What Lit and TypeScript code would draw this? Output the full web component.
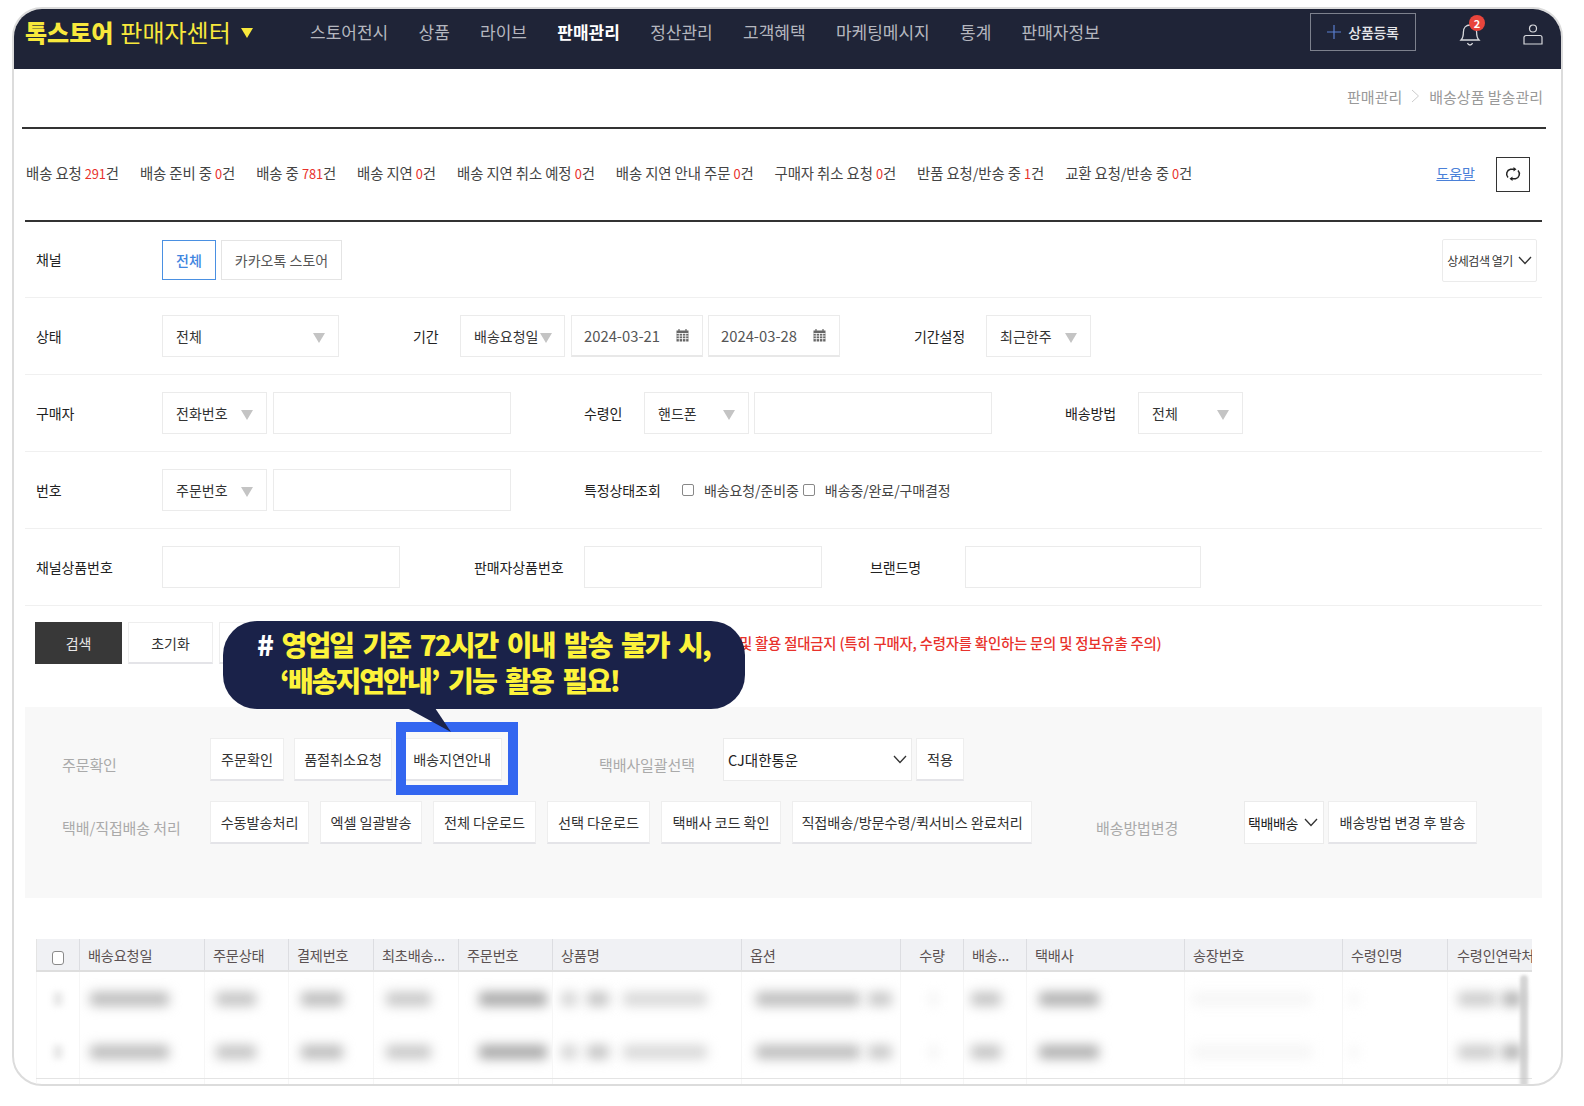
import { LitElement, html, css, svg } from "lit";
import { customElement } from "lit/decorators.js";
import { styleMap } from "lit/directives/style-map.js";

const NAV = ["스토어전시", "상품", "라이브", "판매관리", "정산관리", "고객혜택", "마케팅메시지", "통계", "판매자정보"];
const STATUS: [string, string][] = [
  ["배송 요청 ", "291"], ["배송 준비 중 ", "0"], ["배송 중 ", "781"], ["배송 지연 ", "0"], ["배송 지연 취소 예정 ", "0"],
  ["배송 지연 안내 주문 ", "0"], ["구매자 취소 요청 ", "0"], ["반품 요청/반송 중 ", "1"], ["교환 요청/반송 중 ", "0"],
];
// width, label, alignment, blurred bars [offset, width, colour]
type Col = { w: number; t: string; c?: boolean; bars: [number, number, string][] };
const COLS: Col[] = [
  { w: 125, t: "배송요청일", bars: [[10, 79, "#bcbcbc"]] },
  { w: 84, t: "주문상태", bars: [[11, 40, "#c4c4c4"]] },
  { w: 85, t: "결제번호", bars: [[12, 42, "#bcbcbc"]] },
  { w: 85, t: "최초배송...", bars: [[12, 45, "#c8c8c8"]] },
  { w: 94, t: "주문번호", bars: [[20, 68, "#a8a8a8"]] },
  { w: 189, t: "상품명", bars: [[8, 16, "#d2d2d2"], [10, 22, "#c4c4c4"], [14, 84, "#d8d8d8"]] },
  { w: 159, t: "옵션", bars: [[14, 104, "#bcbcbc"], [8, 24, "#c8c8c8"]] },
  { w: 63, t: "수량", c: true, bars: [[30, 5, "#e8e8e8"]] },
  { w: 63, t: "배송...", bars: [[7, 30, "#c4c4c4"]] },
  { w: 158, t: "택배사", bars: [[12, 60, "#b0b0b0"]] },
  { w: 158, t: "송장번호", bars: [[6, 122, "#f6f6f6"]] },
  { w: 105, t: "수령인명", bars: [[8, 6, "#f0f0f0"]] },
  { w: 85, t: "수령인연락처", bars: [[10, 38, "#cccccc"], [6, 20, "#b0b0b0"]] },
];

const chevron = svg`<svg class="chev" viewBox="0 0 14 9" width="14" height="9"><path d="M1 1l6 6.5L13 1" fill="none" stroke="#333" stroke-width="1.3"/></svg>`;
const calendar = svg`<svg class="cal" viewBox="0 0 13 13" width="13" height="13"><rect x="0.5" y="1.5" width="12" height="11" fill="#666"/><path d="M0.5 4.5h12M0.5 7h12M0.5 9.6h12M3.3 4v9M6.5 4v9M9.7 4v9" stroke="#fff" stroke-width=".8"/><path d="M3 0v3M10 0v3" stroke="#666" stroke-width="1.2"/></svg>`;

@customElement("app-root")
export class AppRoot extends LitElement {
  static styles = css`
    :host { display: block; height: 1106px; padding: 7px 0 0 12px; box-sizing: border-box; background: #fff;
      font-family: "Noto Sans CJK KR", "Noto Sans", sans-serif; font-size: 14px; color: #333; overflow: hidden; }
    * { box-sizing: border-box; }
    .frame { position: relative; width: 1551px; height: 1079px; border: 2px solid #dcdcdc; border-radius: 30px; overflow: hidden; background: #fff; }

    .top { height: 60px; background: #1f2437; display: flex; align-items: center; padding: 0 0 15px 11px; color: #b5b7bf; }
    .logo { width: 285px; font-size: 24px; color: #f8e83c; display: flex; align-items: center; white-space: nowrap; }
    .logo b { font-weight: 800; margin-right: 7px; }
    .logo i { width: 0; height: 0; border: 6.5px solid transparent; border-top: 10px solid #f8e83c; border-bottom: 0; margin-left: 10px; margin-top: 3px; }
    .nav { display: flex; gap: 30.3px; font-size: 17px; flex: 1; }
    .nav .on { color: #fff; font-weight: 700; }
    .add { width: 106px; height: 38px; margin-top: 0; border: 1px solid #7d818d; display: flex; align-items: center; justify-content: center; gap: 7px; color: #e6e7ea; font-size: 14px; font-weight: 500; letter-spacing: -.3px; }
    .bell { position: relative; width: 30px; height: 34px; margin-left: 42px; margin-top: 6px; }
    .badge { position: absolute; left: 11px; top: -3px; width: 16px; height: 16px; border-radius: 50%; background: #e8453c; color: #fff; font-size: 11px; font-weight: 700; display: flex; align-items: center; justify-content: center; }
    .user { margin: 6px 18px 0 35px; }

    .crumb { height: 60px; display: flex; align-items: center; justify-content: flex-end; gap: 9px; padding: 0 3px 4px 0; color: #999; font-size: 15px; border-bottom: 2px solid #333; margin: 0 15px 0 8px; }

    .status { height: 93px; margin: 0 19px 0 11px; border-bottom: 2px solid #333; display: flex; align-items: center; padding: 0 12px 4px 1px; }
    .items { display: flex; gap: 21px; flex: 1; white-space: nowrap; letter-spacing: -.1px; color: #444; font-size: 14.4px; }
    .items em { font-style: normal; color: #e8322c; font-size: 12.8px; }
    .help { color: #4a80d8; text-decoration: underline; font-size: 14px; margin-right: 21px; }
    .refresh { width: 34px; height: 35px; margin-top: 3px; border: 1px solid #333; display: flex; align-items: center; justify-content: center; }

    .form { margin: 0 19px 0 11px; }
    .row { height: 77px; display: flex; align-items: center; padding: 0 5px 0 11px; border-bottom: 1px solid #f0f0f0; white-space: nowrap; }
    .row.first { height: 76px; padding-bottom: 2px; }
    .lab { color: #222; font-size: 14px; letter-spacing: -.1px; }
    .l126 { width: 126px; }
    .box { height: 42px; border: 1px solid #ebebeb; background: #fff; display: flex; align-items: center; justify-content: space-between; padding: 0 13px; color: #333; flex: none; }
    .tri { width: 0; height: 0; border: 6.5px solid transparent; border-top: 10px solid #c4c4c4; border-bottom: 0; margin-top: 3px; }
    .ch { height: 40px; margin-top: 2px; border: 1px solid #e4e4e4; display: flex; align-items: center; justify-content: center; color: #555; }
    .ch.on { width: 54px; border-color: #4a90e2; color: #3f86df; font-weight: 500; }
    .ch.off { width: 121px; margin-left: 5px; }
    .detail { margin-left: auto; margin-top: 3px; width: 95px; height: 43px; border: 1px solid #ebebeb; border-radius: 2px; display: flex; align-items: center; justify-content: center; gap: 5px; font-size: 12px; letter-spacing: -.5px; }
    .w105 { width: 105px; } .w177 { width: 177px; } .w238 { width: 238px; } .w236 { width: 236px; } .w132 { width: 132px; }
    .w104 { width: 105px; padding-right: 12px; padding-left: 13px; }
    .date { color: #555; font-size: 14.8px; border-bottom: 2px solid #e8e8e8; padding: 0 13px 0 12px; }
    .ml4 { margin-left: 6px; } .ml3 { margin-left: 5px; } .ml5 { margin-left: 5px; }
    .g74 { margin-left: 74px; width: 47px; }
    .g74d { margin-left: 74px; width: 72px; }
    .g73 { margin-left: 73px; width: 60px; }
    .g73b { margin-left: 73px; width: 74px; }
    .g74b { margin-left: 74px; width: 110px; }
    .g48 { margin-left: 48px; width: 95px; }
    .g74c { margin-left: 73px; width: 73px; }
    .ck { width: 12px; height: 12px; border: 1px solid #888; border-radius: 2px; background: #fff; flex: none; margin: 0 10px 0 0; }
    .ck.a { margin-left: 24px; }
    .ck.b { margin-left: 4px; }
    .plain { color: #444; letter-spacing: -.1px; font-size: 14px; }

    .acts { display: flex; align-items: center; margin: 16px 19px 0 21px; height: 42px; white-space: nowrap; }
    .btn { height: 42px; border: 1px solid #eee; border-bottom: 2px solid #e4e4e8; background: #fff; display: flex; align-items: center; justify-content: center; color: #333; flex: none; letter-spacing: -.1px; }
    .search { width: 87px; background: #383838; border: none; color: #e8e8e8; }
    .reset { width: 85px; margin-left: 6px; }
    .hide { width: 60px; margin-left: 6px; }
    .warn { color: #e8322c; position: absolute; left: 725px; top: 623px; font-size: 14.4px; letter-spacing: -.2px; white-space: nowrap; font-weight: 500; }

    .panel { margin: 43px 19px 0 11px; height: 191px; background: #f8f8f8; padding: 31px 0 0 37px; display: flex; flex-direction: column; gap: 20px; white-space: nowrap; }
    .prow { display: flex; align-items: center; height: 43px; }
    .plab { color: #aaa; font-size: 15px; padding-top: 10px; letter-spacing: -.1px; }
    .plab.a { width: 148px; }
    .pb { height: 43px; margin-right: 10px; font-size: 14.2px; }
    .b74 { width: 74px; } .b98 { width: 98px; } .b100 { width: 100px; }
    .b99 { width: 99px; margin-right: 11px; } .b102 { width: 102px; margin-right: 11px; } .b103 { width: 103px; margin-right: 11px; } .b120 { width: 120px; margin-right: 11px; } .b240 { width: 240px; margin-right: 0; }
    .plab.s { margin-left: 87px; width: 124px; }
    .sel { width: 189px; height: 43px; border: 1px solid #ebebeb; background: #fff; display: flex; align-items: center; justify-content: space-between; padding: 0 4px 0 4px; flex: none; color: #222; font-size: 14.5px; }
    .apply { width: 48px; margin-left: 4px; margin-right: 0; }
    .plab.m { margin-left: 64px; width: 148px; }
    .sel2 { width: 80px; padding: 0 5px 0 3px; letter-spacing: -.4px; font-size: 14px; }
    .b149 { width: 149px; margin-left: 4px; margin-right: 0; }

    .table { position: relative; margin: 41px 12px 0 22px; width: 1496px; overflow: hidden; }
    .thead { display: flex; height: 33px; background: #f0f1f4; border-bottom: 2px solid #dedede; font-size: 14.2px; }
    .th { height: 31px; display: flex; align-items: center; padding: 0 8px; border-left: 1px solid #dcdde1; color: #5b5152; white-space: nowrap; overflow: hidden; flex: none; letter-spacing: -.2px; }
    .th.c { justify-content: center; }
    .th.box0 { width: 43px; border-left: 1px solid #e4e4e4; justify-content: center; padding-top: 6px; }
    .th.last { padding: 0 0 0 9px; }
    .cb { width: 12px; height: 14px; border: 1px solid #8a8a8a; border-radius: 3px; background: #fff; }
    .tr { height: 53px; display: flex; }
    .td { height: 53px; flex: none; border-left: 1px solid #f6f6f6; display: flex; align-items: center; overflow: hidden; }
    .td0 { width: 43px; justify-content: center; }
    .bar { height: 14px; flex: none; filter: blur(6px); border-radius: 3px; }
    .bar0 { width: 10px; background: #e8e8e8; filter: blur(3px); }
    .tr.line { height: 20px; border-top: 1px solid #e4e4e4; }
    .scroll { position: absolute; left: 1484px; top: 36px; width: 8px; height: 112px; background: #c4c4c4; border-radius: 4px; filter: blur(1.5px); opacity: .7; }

    .highlight { position: absolute; left: 382px; top: 713px; width: 122px; height: 73px; border: 10px solid #3366f0; }
    .callout { position: absolute; left: 209px; top: 612px; width: 522px; height: 88px; background: #1a2249; border-radius: 34px; color: #fdf33b; font-size: 28px; font-weight: 800; letter-spacing: -1.95px; word-spacing: 5px; line-height: 36px; padding: 5px 0 0 34px; white-space: nowrap; }
    .callout span { color: #fff; }
    .callout div + div { padding-left: 23px; }
    .tail { position: absolute; left: 184px; top: 87px; }
  `;

  render() {
    const rows = [0, 1];
    return html`
      <div class="frame">
        <div class="top">
          <div class="logo"><b>톡스토어</b>판매자센터<i></i></div>
          <div class="nav">${NAV.map((n) => html`<span class=${n === "판매관리" ? "on" : ""}>${n}</span>`)}</div>
          <div class="add">
            <svg width="14" height="14" viewBox="0 0 14 14"><path d="M7 0v14M0 7h14" stroke="#5a7fd0" stroke-width="1.2"/></svg>
            상품등록
          </div>
          <div class="bell">
            <svg width="24" height="30" viewBox="0 0 24 30" fill="none" stroke="#d8d9dd" stroke-width="1.3"><path d="M3 22c2-2 2.4-4 2.4-8 0-4 2.6-7 6.6-7s6.600 3 6.600 7c0 4 .4 6 2.400 8zM9.500 25c.5 1.500 1.500 2 2.500 2s2-.5 2.500-2"/></svg>
            <span class="badge">2</span>
          </div>
          <svg class="user" width="20" height="22" viewBox="0 0 20 22" fill="none" stroke="#d8d9dd" stroke-width="1.2"><circle cx="10" cy="4.500" r="3.500"/><path d="M3 11.500h14a2 2 0 0 1 2 2V20H1v-6.500a2 2 0 0 1 2-2z"/></svg>
        </div>

        <div class="crumb">
          <span>판매관리</span>
          <svg width="9" height="14" viewBox="0 0 9 14"><path d="M1 1l6.500 6L1 13" fill="none" stroke="#ccc"/></svg>
          <span>배송상품 발송관리</span>
        </div>

        <div class="status">
          <div class="items">${STATUS.map(([a, b]) => html`<span>${a}<em>${b}</em>건</span>`)}</div>
          <span class="help">도움말</span>
          <div class="refresh">
            <svg width="16" height="14" viewBox="0 0 16 14" fill="none" stroke="#222" stroke-width="1.5"><path d="M3 10.500A5 5 0 0 1 5.500 2.200h3.500M13 3.500a5 5 0 0 1-2.500 8.300H7"/><path d="M8.500 0l3 2.200-3 2.300zM7.500 9.500l-3 2.300 3 2.200z" fill="#222" stroke="none"/></svg>
          </div>
        </div>

        <div class="form">
          <div class="row first">
            <span class="lab l126">채널</span>
            <span class="ch on">전체</span><span class="ch off">카카오톡 스토어</span>
            <span class="detail">상세검색 열기 ${chevron}</span>
          </div>
          <div class="row">
            <span class="lab l126">상태</span>
            <div class="box w177">전체<i class="tri"></i></div>
            <span class="lab g74">기간</span>
            <div class="box w104">배송요청일<i class="tri"></i></div>
            <div class="box w132 date ml4">2024-03-21 ${calendar}</div>
            <div class="box w132 date ml5">2024-03-28 ${calendar}</div>
            <span class="lab g74d">기간설정</span>
            <div class="box w105">최근한주<i class="tri"></i></div>
          </div>
          <div class="row">
            <span class="lab l126">구매자</span>
            <div class="box w105">전화번호<i class="tri"></i></div>
            <div class="box w238 ml4"></div>
            <span class="lab g73">수령인</span>
            <div class="box w105">핸드폰<i class="tri"></i></div>
            <div class="box w238 ml3"></div>
            <span class="lab g74c">배송방법</span>
            <div class="box w105">전체<i class="tri"></i></div>
          </div>
          <div class="row">
            <span class="lab l126">번호</span>
            <div class="box w105">주문번호<i class="tri"></i></div>
            <div class="box w238 ml4"></div>
            <span class="lab g73b">특정상태조회</span>
            <i class="ck a"></i><span class="plain">배송요청/준비중</span>
            <i class="ck b"></i><span class="plain">배송중/완료/구매결정</span>
          </div>
          <div class="row">
            <span class="lab l126">채널상품번호</span>
            <div class="box w238"></div>
            <span class="lab g74b">판매자상품번호</span>
            <div class="box w238"></div>
            <span class="lab g48">브랜드명</span>
            <div class="box w236"></div>
          </div>
        </div>

        <div class="acts">
          <span class="btn search">검색</span>
          <span class="btn reset">초기화</span>
          <span class="btn hide"></span>
        </div>
        <span class="warn">및 활용 절대금지 (특히 구매자, 수령자를 확인하는 문의 및 정보유출 주의)</span>

        <div class="panel">
          <div class="prow">
            <span class="plab a">주문확인</span>
            <span class="btn pb b74">주문확인</span>
            <span class="btn pb b98">품절취소요청</span>
            <span class="btn pb b100">배송지연안내</span>
            <span class="plab s">택배사일괄선택</span>
            <div class="sel">CJ대한통운 ${chevron}</div>
            <span class="btn pb apply">적용</span>
          </div>
          <div class="prow">
            <span class="plab a">택배/직접배송 처리</span>
            <span class="btn pb b99">수동발송처리</span>
            <span class="btn pb b102">엑셀 일괄발송</span>
            <span class="btn pb b103">전체 다운로드</span>
            <span class="btn pb b103">선택 다운로드</span>
            <span class="btn pb b120">택배사 코드 확인</span>
            <span class="btn pb b240">직접배송/방문수령/퀵서비스 완료처리</span>
            <span class="plab m">배송방법변경</span>
            <div class="sel sel2">택배배송 ${chevron}</div>
            <span class="btn pb b149">배송방법 변경 후 발송</span>
          </div>
        </div>

        <div class="table">
          <div class="thead">
            <div class="th box0"><i class="cb"></i></div>
            ${COLS.map((c, i) => html`<div class="th ${c.c ? "c" : ""} ${i === COLS.length - 1 ? "last" : ""}" style=${styleMap({ width: c.w + "px" })}>${c.t}</div>`)}
          </div>
          ${rows.map(() => html`
            <div class="tr">
              <div class="td td0"><i class="bar bar0"></i></div>
              ${COLS.map((c) => html`<div class="td" style=${styleMap({ width: c.w + "px" })}>
                ${c.bars.map(([o, w, col]) => html`<i class="bar" style=${styleMap({ marginLeft: o + "px", width: w + "px", background: col })}></i>`)}
              </div>`)}
            </div>`)}
          <div class="tr line">
            <div class="td td0"></div>
            ${COLS.map((c) => html`<div class="td" style=${styleMap({ width: c.w + "px" })}></div>`)}
          </div>
          <div class="scroll"></div>
        </div>

        <div class="highlight"></div>
        <div class="callout">
          <div><span>#</span> 영업일 기준 72시간 이내 발송 불가 시,</div>
          <div>‘배송지연안내’ 기능 활용 필요!</div>
          <svg class="tail" width="46" height="25" viewBox="0 0 46 25"><path d="M0 0h28l16 24z" fill="#1a2249"/></svg>
        </div>
      </div>
    `;
  }
}
